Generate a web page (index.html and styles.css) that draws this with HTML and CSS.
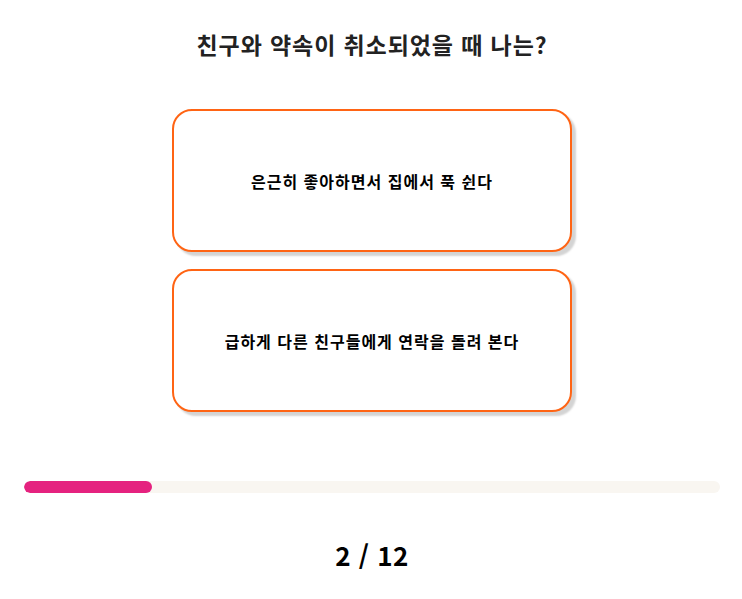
FILE: index.html
```html
<!DOCTYPE html>
<html lang="ko">
<head>
<meta charset="utf-8">
<link rel="stylesheet" href="styles.css">
</head>
<body>
<main class="quiz">
  <h1 class="question">친구와 약속이 취소되었을 때 나는?</h1>
  <div class="options">
    <button class="option">은근히 좋아하면서 집에서 푹 쉰다</button>
    <button class="option">급하게 다른 친구들에게 연락을 돌려 본다</button>
  </div>
  <div class="progress"><div class="progress-fill" style="width:128px"></div></div>
  <div class="counter">2 / 12</div>
</main>
</body>
</html>
```
FILE: styles.css
```css
html, body {
  margin: 0;
  padding: 0;
  background: #ffffff;
}
body {
  font-family: "Noto Sans CJK KR", "Noto Sans", sans-serif;
  color: #222222;
}
.quiz {
  display: flex;
  flex-direction: column;
  align-items: center;
  padding: 29px 22px 0 24px;
}
.question {
  margin: 0;
  font-size: 23px;
  line-height: 30px;
  font-weight: 700;
  letter-spacing: 0.9px;
  color: #222222;
}
.options {
  display: flex;
  flex-direction: column;
  gap: 17px;
  margin-top: 50px;
}
.option {
  width: 400px;
  height: 143px;
  box-sizing: border-box;
  border: 2px solid #ff6414;
  border-radius: 20px;
  background: #ffffff;
  box-shadow: 4px 4px 2px #d4d4d4;
  font-family: "Noto Sans CJK KR", "Noto Sans", sans-serif;
  font-size: 16px;
  font-weight: 700;
  letter-spacing: 1px;
  color: #000000;
  padding: 0;
}
.progress {
  align-self: stretch;
  margin-top: 69px;
  height: 12px;
  border-radius: 6px;
  background: #f9f6f1;
  overflow: hidden;
}
.progress-fill {
  height: 100%;
  border-radius: 6px;
  background: #e5227f;
}
.counter {
  margin-top: 46px;
  font-size: 26px;
  line-height: 32px;
  font-weight: 700;
  letter-spacing: 0.5px;
  color: #000000;
}
```
